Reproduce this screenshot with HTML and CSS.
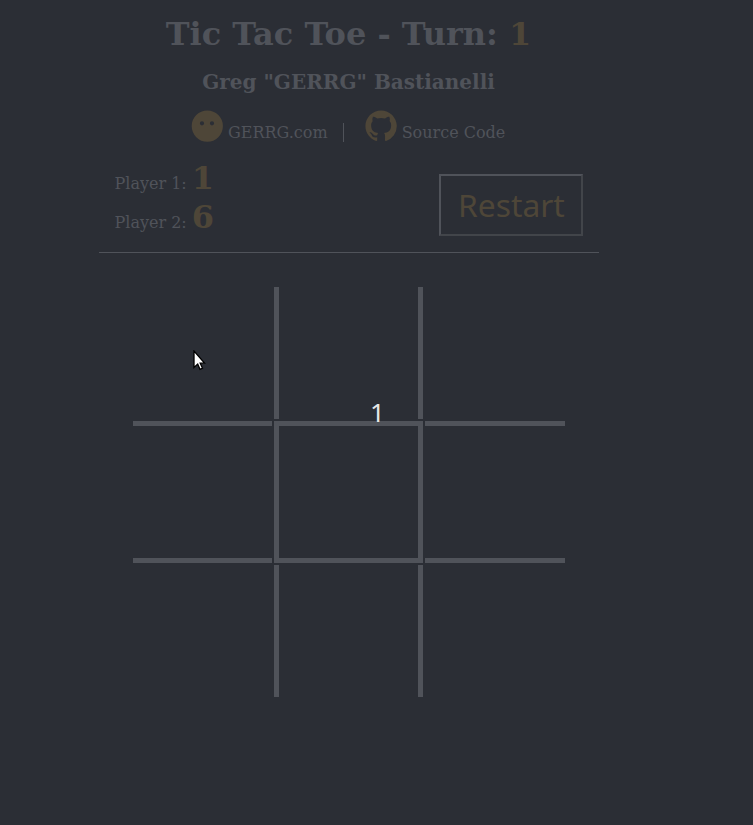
FILE: index.html
```html
<!DOCTYPE html>
<html lang="en">
<head>
<meta charset="utf-8">
<title>Tic Tac Toe</title>
<link rel="stylesheet" href="styles.css">
</head>
<body>
<main class="game">
  <header class="header">
    <h1 class="title">Tic Tac Toe - Turn: <span class="accent">1</span></h1>
    <h2 class="author">Greg "GERRG" Bastianelli</h2>
    <nav class="links">
      <a class="link"><svg class="icon" viewBox="0 0 32 32"><path fill-rule="evenodd" d="M16.300.5a15.600 15.600 0 1 0 0 31.200 15.600 15.600 0 0 0 0-31.200ZM11 11.200a2.100 2.100 0 1 1 0 4.200 2.100 2.100 0 0 1 0-4.200Zm10 0a2.100 2.100 0 1 1 0 4.200 2.100 2.100 0 0 1 0-4.200Z"/></svg><span>GERRG.com</span></a>
      <span class="divider"></span>
      <a class="link"><svg class="icon" viewBox="-.2 -.2 16.300 16.300"><path d="M8 0C3.580 0 0 3.580 0 8c0 3.540 2.290 6.530 5.470 7.590.4.070.55-.17.55-.38 0-.19-.010-.82-.010-1.490-2.010.37-2.530-.49-2.690-.94-.09-.23-.48-.94-.82-1.130-.28-.15-.68-.52-.010-.53.63-.010 1.080.58 1.230.82.72 1.210 1.870.87 2.330.66.070-.52.28-.87.51-1.070-1.780-.2-3.640-.89-3.640-3.950 0-.87.31-1.590.82-2.150-.08-.2-.36-1.020.08-2.120 0 0 .67-.21 2.200.82.64-.18 1.320-.27 2-.27s1.360.09 2 .27c1.530-1.040 2.200-.82 2.200-.82.44 1.100.16 1.920.08 2.120.51.56.82 1.270.82 2.150 0 3.070-1.870 3.750-3.650 3.950.29.25.54.73.54 1.480 0 1.070-.010 1.930-.010 2.200 0 .21.15.46.55.38A8.010 8.010 0 0 0 16 8c0-4.420-3.580-8-8-8Z"/></svg><span>Source Code</span></a>
    </nav>
  </header>
  <section class="status">
    <div class="scores">
      <div class="score">Player 1: <b class="points">1</b></div>
      <div class="score">Player 2: <b class="points">6</b></div>
    </div>
    <button class="restart"><span class="restart-label">Restart</span></button>
  </section>
  <section class="board">
    <div class="cell"></div><div class="cell sides"></div><div class="cell"></div>
    <div class="cell rails"></div><div class="cell sides rails"></div><div class="cell rails"></div>
    <div class="cell"></div><div class="cell sides"></div><div class="cell"></div>
  </section>
</main>
<span class="floating-mark">1</span>
<svg class="cursor" viewBox="0 0 14 22"><path d="M1 1v16.500l3.700-3.400 2.300 5.200 2.500-1.200-2.300-4.900h4.300Z"/></svg>
</body>
</html>
```
FILE: styles.css
```css
body {
  margin: 0;
  height: 825px;
  overflow: hidden;
  background: #2b2e35;
  color: #50535a;
  font: 16px/19px "DejaVu Serif", serif;
}
.game { width: 500px; margin-left: 99px; }
.header { text-align: center; }
.title { margin: 0 0 0 -1px; padding-top: 15px; font-size: 32px; line-height: 38px; }
.accent { color: #4e4638; }
.author { margin: 17px 1px 0 0; font-size: 20px; line-height: 24px; }
.links { display: flex; height: 32px; margin: 16px 0 0 92px; }
.link { display: flex; gap: 5px; white-space: nowrap; }
.link span { margin-top: 13px; }
.icon { width: 32px; height: 32px; fill: #4e4638; }
.divider { width: 1px; height: 19px; margin: 13px 21px 0 15px; background: #50535a; }
.status {
  display: flex;
  justify-content: space-between;
  box-sizing: border-box;
  height: 111px;
  padding: 17px 16px 0 15.5px;
  border-bottom: 1px solid #50535a;
}
.score { height: 39px; line-height: 38px; white-space: nowrap; }
.points { color: #4e4638; font-size: 32px; line-height: 38px; }
.restart {
  width: 144px;
  height: 62px;
  margin-top: 15px;
  padding: 0;
  border: 2px solid;
  border-color: #50535a #42454a #42454a #50535a;
  background: transparent;
  color: #4e4638;
  font: 30px/36px "Noto Sans", sans-serif;
}
.restart-label { display: inline-block; transform: translateY(1px) scaleX(1.06); }
.board {
  display: grid;
  grid-template-columns: 139px 149px 140px;
  grid-template-rows: 132px 142px 132px;
  gap: 2px;
  margin: 34px 0 0 34px;
}
.cell { box-sizing: border-box; border: 0 solid #50535a; }
.sides { border-left-width: 5px; border-right-width: 5px; }
.rails { border-top-width: 5px; border-bottom-width: 5px; }
.floating-mark {
  position: absolute;
  left: 370px;
  top: 394px;
  color: #e6e6e6;
  font: 26px/36px "Noto Sans", sans-serif;
}
.cursor {
  position: absolute;
  left: 193px;
  top: 350px;
  width: 14px;
  height: 22px;
  fill: #fff;
  stroke: #000;
  stroke-width: 1.3;
}
```
